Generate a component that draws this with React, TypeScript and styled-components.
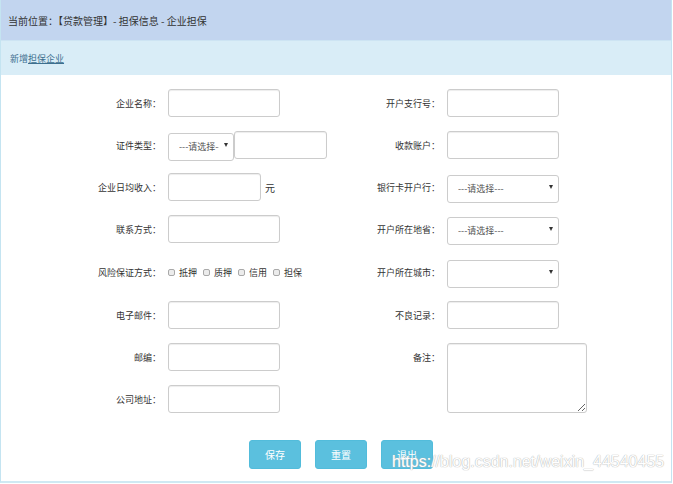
import { ReactNode } from "react";
import styled, { createGlobalStyle } from "styled-components";

const GlobalStyle = createGlobalStyle`
  body {
    margin: 0;
    background: #fff;
    font-family: "Noto Sans CJK SC", "Noto Sans", sans-serif;
  }
`;

const Field = ({ label, children }: { label: string; children: ReactNode }) => (
  <>
    <S.Label>{label}：</S.Label>
    {children}
  </>
);

const Select = ({ width, text }: { width: number; text?: string }) => (
  <S.SelectBox width={width}>
    <S.Select defaultValue="0">
      <option value="0">{text ?? ""}</option>
    </S.Select>
  </S.SelectBox>
);

const GUARANTEES = ["抵押", "质押", "信用", "担保"];

const App = () => {
  return (
    <>
      <GlobalStyle />
      <S.Page>
        <S.Header>当前位置：【贷款管理】- 担保信息 - 企业担保</S.Header>
        <S.SubHeader>
          新增<S.Link>担保企业</S.Link>
        </S.SubHeader>

        <S.Form>
          <Field label="企业名称">
            <S.Input width={112} />
          </Field>
          <Field label="开户支行号">
            <S.Input width={112} />
          </Field>

          <Field label="证件类型">
            <S.Group>
              <Select width={66} text="---请选择---" />
              <S.Input width={93} />
            </S.Group>
          </Field>
          <Field label="收款账户">
            <S.Input width={112} />
          </Field>

          <Field label="企业日均收入">
            <S.Group>
              <S.Input width={93} />
              <S.Unit>元</S.Unit>
            </S.Group>
          </Field>
          <Field label="银行卡开户行">
            <Select width={112} text="---请选择---" />
          </Field>

          <Field label="联系方式">
            <S.Input width={112} />
          </Field>
          <Field label="开户所在地省">
            <Select width={112} text="---请选择---" />
          </Field>

          <Field label="风险保证方式">
            <S.Checks>
              {GUARANTEES.map((item) => (
                <S.Check key={item}>
                  <S.Box type="checkbox" />
                  {item}
                </S.Check>
              ))}
            </S.Checks>
          </Field>
          <Field label="开户所在城市">
            <Select width={112} />
          </Field>

          <Field label="电子邮件">
            <S.Input width={112} />
          </Field>
          <Field label="不良记录">
            <S.Input width={112} />
          </Field>

          <Field label="邮编">
            <S.Input width={112} />
          </Field>
          <Field label="备注">
            <S.TextArea />
          </Field>

          <Field label="公司地址">
            <S.Input width={112} />
          </Field>
        </S.Form>

        <S.Actions>
          <S.Button>保存</S.Button>
          <S.Button>重置</S.Button>
          <S.Button>退出</S.Button>
        </S.Actions>

        <S.Watermark>https://blog.csdn.net/weixin_44540455</S.Watermark>
      </S.Page>
    </>
  );
};

const S = {
  Page: styled.div`
    position: relative;
    width: 672px;
    height: 483px;
    box-sizing: border-box;
    border-left: 1px solid #c4e4f1;
    border-right: 1px solid #c4e4f1;
    border-bottom: 2px solid #cfe9f3;
    display: flex;
    flex-direction: column;
  `,

  Header: styled.div`
    height: 40px;
    display: flex;
    align-items: center;
    padding-left: 7px;
    background: #c2d5ef;
    color: #333;
    font-size: 10px;
  `,

  SubHeader: styled.div`
    height: 34px;
    display: flex;
    align-items: center;
    padding-left: 9px;
    background: #d9edf7;
    border-top: 1px solid #cde4f3;
    color: #3d6f8f;
    font-size: 9px;
  `,

  Link: styled.span`
    text-decoration: underline;
  `,

  Form: styled.div`
    display: grid;
    grid-template-columns: 160px 160px 105px 1fr;
    grid-template-rows: 28px 28px 28px 28px 30px 28px 28px 28px;
    column-gap: 7px;
    row-gap: 14px;
    align-items: center;
    padding-top: 14px;
  `,

  Label: styled.label`
    text-align: right;
    color: #333;
    font-size: 9px;
  `,

  Group: styled.div`
    display: flex;
    align-items: center;
  `,

  Input: styled.input<{ width: number }>`
    width: ${({ width }) => width}px;
    height: 28px;
    box-sizing: border-box;
    border: 1px solid #ccc;
    border-radius: 3px;
    box-shadow: inset 0 1px 1px rgba(0, 0, 0, 0.075);
    outline: none;
  `,

  Unit: styled.span`
    margin-left: 4px;
    color: #333;
    font-size: 10px;
  `,

  SelectBox: styled.div<{ width: number }>`
    position: relative;
    width: ${({ width }) => width}px;
    height: 28px;

    &::after {
      content: "";
      position: absolute;
      right: 6px;
      top: 12px;
      border-left: 2px solid transparent;
      border-right: 2px solid transparent;
      border-top: 4px solid #333;
      pointer-events: none;
    }
  `,

  Select: styled.select`
    appearance: none;
    width: 100%;
    height: 100%;
    box-sizing: border-box;
    padding: 0 14px 0 10px;
    border: 1px solid #ccc;
    border-radius: 3px;
    background: #fff;
    color: #555;
    font-family: inherit;
    font-size: 9px;
    outline: none;
  `,

  Checks: styled.div`
    display: flex;
    align-items: center;
    grid-column: span 1;
    white-space: nowrap;
  `,

  Check: styled.label`
    display: flex;
    align-items: center;
    margin-right: 6px;
    color: #333;
    font-size: 9px;
  `,

  Box: styled.input`
    appearance: none;
    width: 7px;
    height: 7px;
    margin: 0 4px 0 0;
    border: 1px solid #a9a9a9;
    border-radius: 2px;
    background: #ececec;
  `,

  TextArea: styled.textarea`
    grid-row: span 2;
    align-self: start;
    width: 140px;
    height: 70px;
    box-sizing: border-box;
    border: 1px solid #ccc;
    border-radius: 3px;
    box-shadow: inset 0 1px 1px rgba(0, 0, 0, 0.075);
    outline: none;
  `,

  Actions: styled.div`
    display: flex;
    gap: 14px;
    margin-top: 27px;
    padding-left: 248px;
  `,

  Button: styled.button`
    width: 52px;
    height: 29px;
    border: 1px solid #52bcdb;
    border-radius: 3px;
    background: #5bc0de;
    color: #fff;
    font-family: inherit;
    font-size: 10px;
  `,

  Watermark: styled.span`
    position: absolute;
    left: 391px;
    top: 453px;
    color: #fff;
    font-family: "Liberation Sans", Arial, sans-serif;
    font-size: 16px;
    text-shadow: 0 0 1px #b5b5b5, 0 0 1px #b5b5b5;
    white-space: nowrap;
    pointer-events: none;
  `,
};

export default App;
